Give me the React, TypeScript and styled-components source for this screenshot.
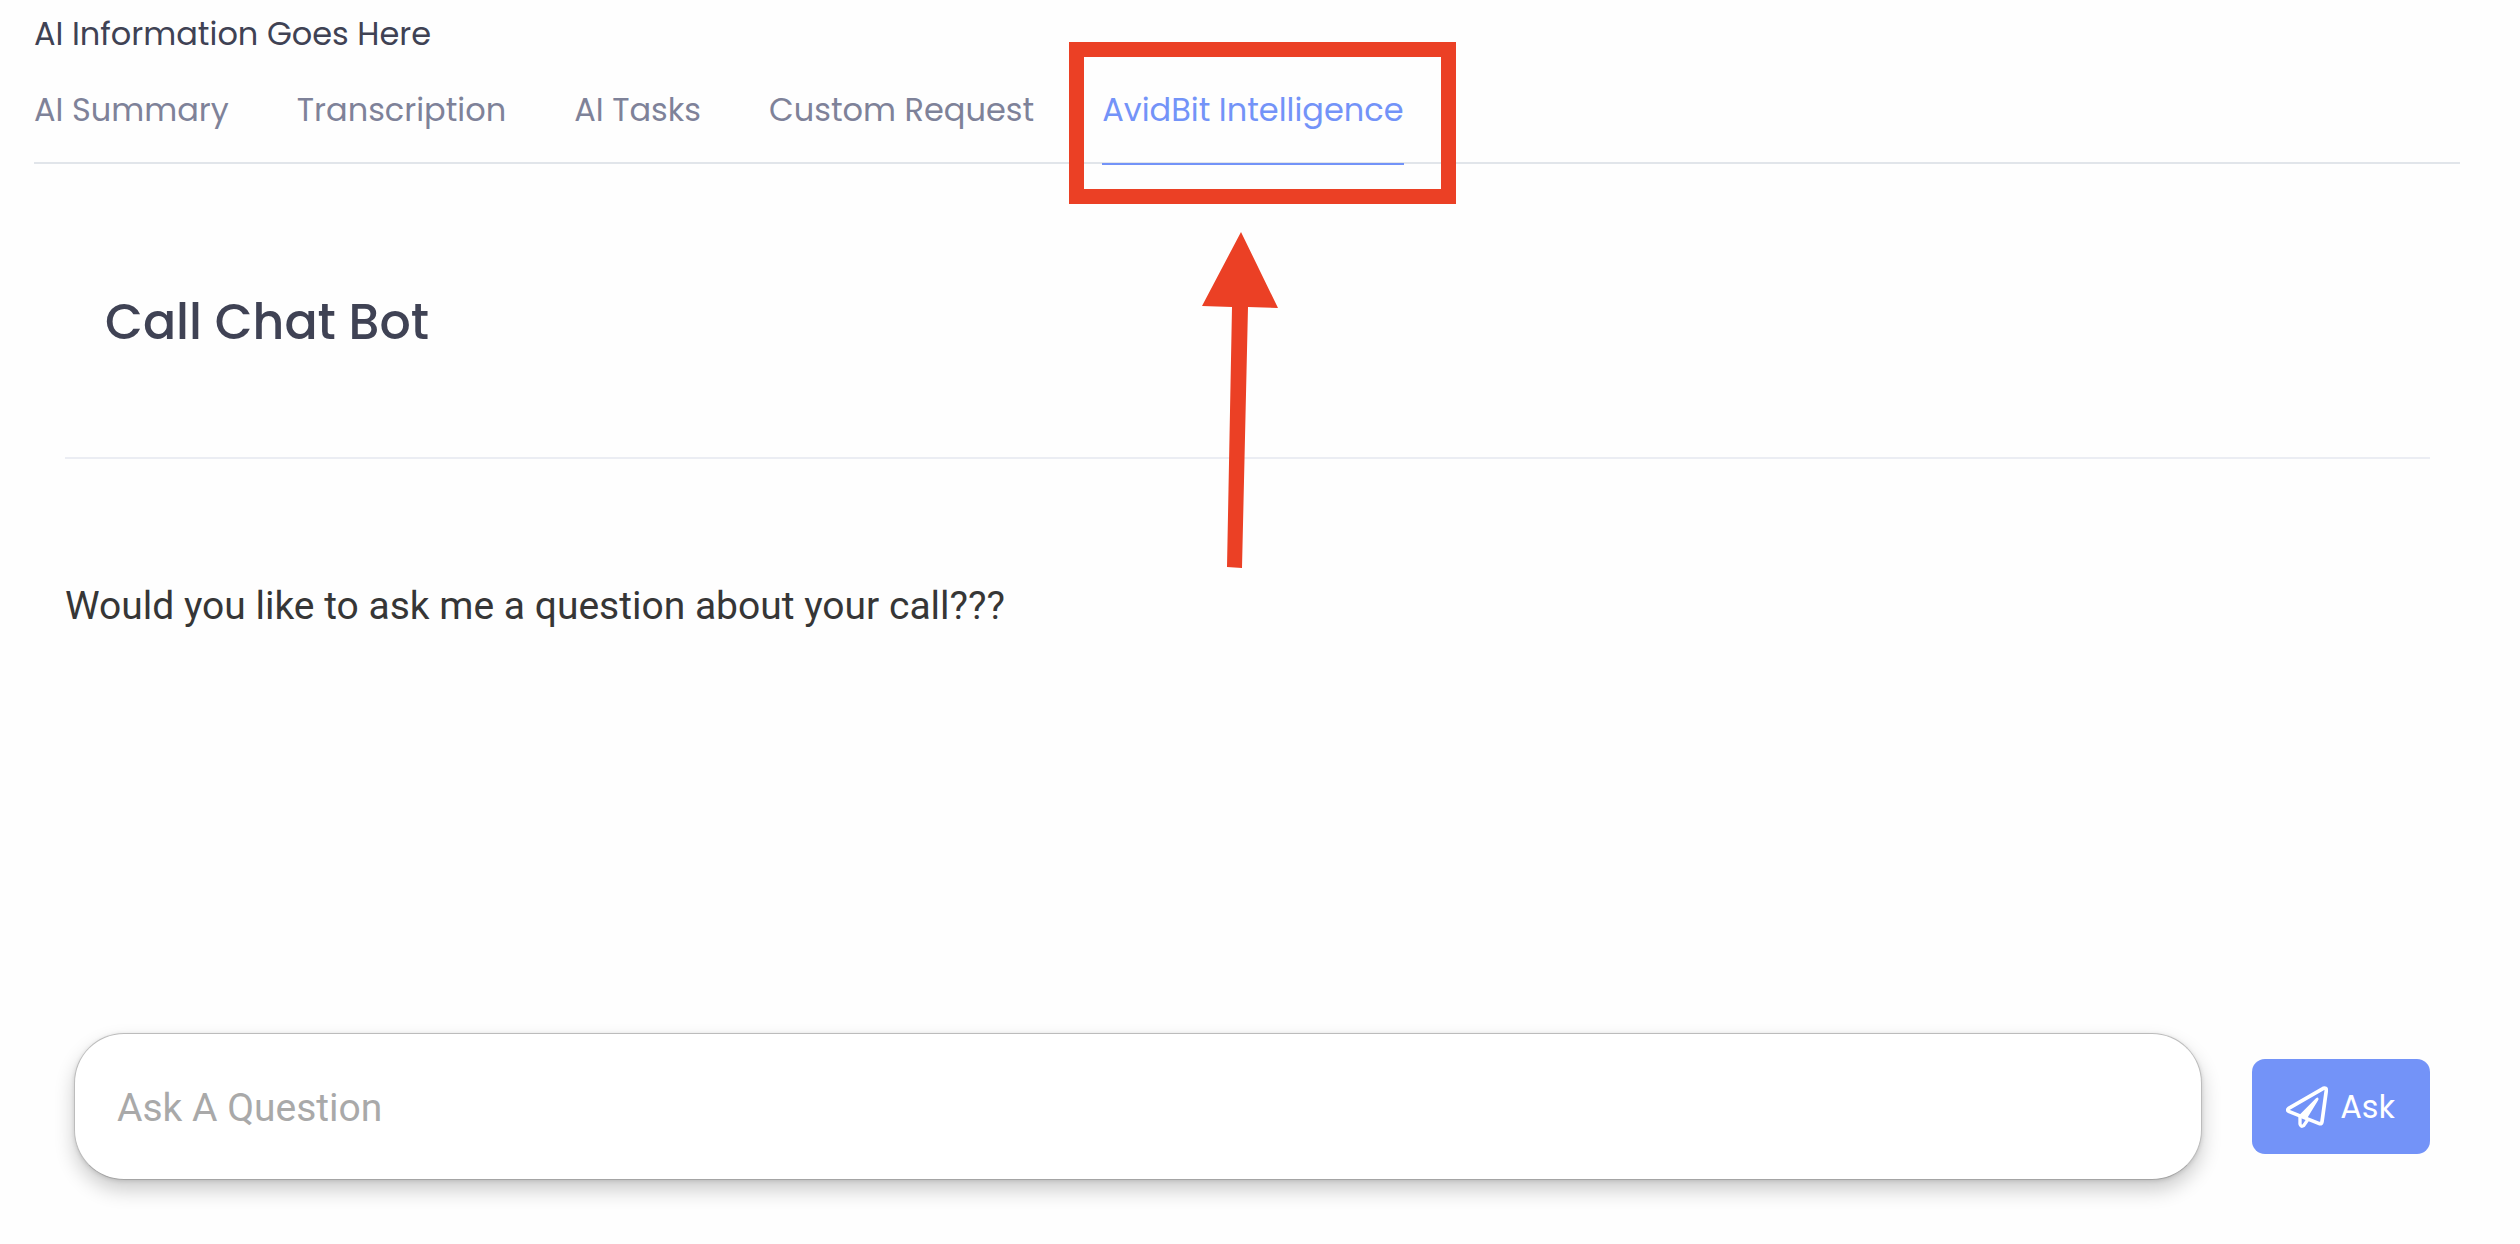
import React, { useState } from "react";
import styled, { createGlobalStyle } from "styled-components";

const brand = "#7393f8";
const ink = "#3f4254";
const marker = "#eb4025";
const headingFont = `Poppins, Inter, "Liberation Sans", sans-serif`;
const bodyFont = `Roboto, "Liberation Sans", sans-serif`;

const GlobalStyle = createGlobalStyle`
  *, *::before, *::after { box-sizing: border-box; }
  body {
    margin: 0;
    background: #fefefe;
    color: ${ink};
    font-family: ${headingFont};
    font-size: 32px;
  }
`;

const Page = styled.main`
  min-height: 100vh;
  padding: 10px 60px 60px 34px;
`;

const PageTitle = styled.h1`
  margin: 0;
  font-size: 32px;
  line-height: 48px;
  font-weight: 400;
`;

const TabBar = styled.nav`
  display: flex;
  gap: 68px;
  height: 106px;
  border-bottom: 2px solid #e1e5ea;
`;

const TabItem = styled.div`
  position: relative;
  display: flex;
`;

const Tab = styled.button<{ $active: boolean }>`
  height: 107px;
  padding: 0 0 2px;
  border: 0;
  border-bottom: 2px solid ${(p) => (p.$active ? brand : "transparent")};
  background: none;
  color: ${(p) => (p.$active ? brand : "#7e8299")};
  font-family: inherit;
  font-size: 32px;
  line-height: 48px;
  white-space: nowrap;
  cursor: pointer;
`;

const Callout = styled.div`
  position: absolute;
  top: -16px;
  left: -33px;
  width: 387px;
  height: 162px;
  border: 15px solid ${marker};
  pointer-events: none;
`;

const Arrow = styled.svg`
  position: absolute;
  top: 174px;
  left: 100px;
  width: 76px;
  height: 336px;
  pointer-events: none;
`;

const Panel = styled.section`
  margin: 0 30px 0 31px;
`;

const PanelHeader = styled.header`
  display: flex;
  align-items: center;
  height: 295px;
  padding: 23px 40px 0;
  border-bottom: 2px solid #ebedf3;
`;

const PanelTitle = styled.h2`
  margin: 0;
  font-size: 49px;
  line-height: 72px;
  font-weight: 500;
`;

const Messages = styled.div`
  height: 574px;
  padding-top: 117px;
`;

const Message = styled.p`
  margin: 0;
  color: #363636;
  font-family: ${bodyFont};
  font-size: 39px;
  line-height: 60px;
`;

const AskForm = styled.form`
  display: flex;
  align-items: center;
  gap: 50px;
  padding-left: 9px;
`;

const Question = styled.input`
  flex: 1;
  min-width: 0;
  height: 147px;
  padding: 2px 42px 0;
  border: 1px solid #bcbcbc;
  border-bottom-color: #a4a4a4;
  border-radius: 50px;
  background: #fff;
  box-shadow: 0 10px 20px rgba(0, 0, 0, 0.2), 0 1px 4px rgba(0, 0, 0, 0.12);
  color: #363636;
  font-family: ${bodyFont};
  font-size: 39px;
  outline: none;

  &::placeholder {
    color: #a9a9a9;
    opacity: 1;
  }
`;

const AskButton = styled.button`
  display: flex;
  align-items: center;
  gap: 12px;
  height: 95px;
  padding: 0 35px 0 34px;
  border: 0;
  border-radius: 13px;
  background: ${brand};
  color: #fff;
  font-family: inherit;
  font-size: 32px;
  line-height: 48px;
  cursor: pointer;
`;

const PlaneIcon = () => (
  <svg width="42" height="42" viewBox="0 0 126 126" fill="none" aria-hidden="true">
    <path
      d="M112 7 8 67Q2 72 8 76L100 113Q107 114 108 107L121 13Q121 4 112 7Z"
      stroke="#fff"
      strokeWidth="11"
      strokeLinejoin="round"
    />
    <path d="M97 36Q99 40 95 45L62 99 42 92 43 84 90 37Q95 33 97 36Z" fill="#fff" />
    <path
      d="M42 90V114Q44 124 53 119L64 103"
      stroke="#fff"
      strokeWidth="10"
      strokeLinecap="round"
      strokeLinejoin="round"
    />
  </svg>
);

const tabs = ["AI Summary", "Transcription", "AI Tasks", "Custom Request", "AvidBit Intelligence"];
const highlighted = "AvidBit Intelligence";

export default function App() {
  const [active, setActive] = useState(highlighted);
  const [question, setQuestion] = useState("");

  return (
    <>
      <GlobalStyle />
      <Page>
        <PageTitle>AI Information Goes Here</PageTitle>
        <TabBar>
          {tabs.map((name) => (
            <TabItem key={name}>
              <Tab type="button" $active={name === active} onClick={() => setActive(name)}>
                {name}
              </Tab>
              {name === highlighted && (
                <>
                  <Callout />
                  <Arrow viewBox="0 0 76 336" aria-hidden="true">
                    <path d="M39 0 76 76 46 75 40 336 25 335 30 75 0 74Z" fill={marker} />
                  </Arrow>
                </>
              )}
            </TabItem>
          ))}
        </TabBar>
        <Panel>
          <PanelHeader>
            <PanelTitle>Call Chat Bot</PanelTitle>
          </PanelHeader>
          <Messages>
            <Message>Would you like to ask me a question about your call???</Message>
          </Messages>
          <AskForm onSubmit={(e) => e.preventDefault()}>
            <Question
              type="text"
              aria-label="Ask A Question"
              placeholder="Ask A Question"
              value={question}
              onChange={(e) => setQuestion(e.target.value)}
            />
            <AskButton type="submit">
              <PlaneIcon />
              Ask
            </AskButton>
          </AskForm>
        </Panel>
      </Page>
    </>
  );
}
